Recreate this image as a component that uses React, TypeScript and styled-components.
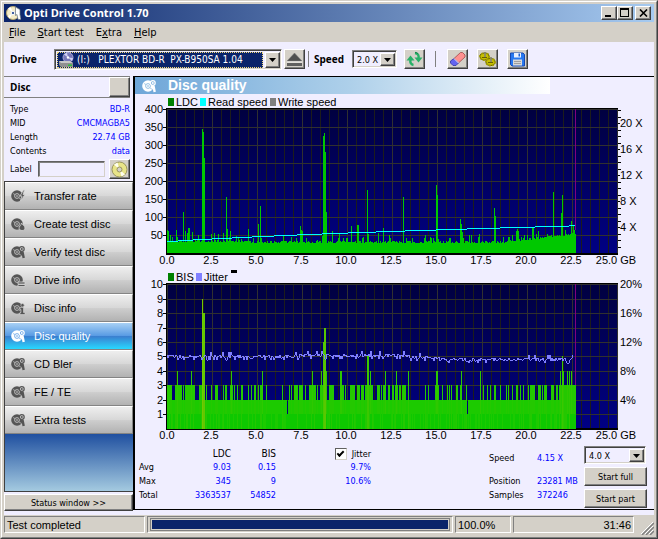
import React from 'react';
import styled, { createGlobalStyle, css } from 'styled-components';

const FACE = '#d4d0c8';
const PANEL = '#f0eeff';
const UI = '"DejaVu Sans Condensed", "Noto Sans", sans-serif';
const SANS = '"Liberation Sans", Arial, sans-serif';
const BOLD = '"Open Sans", "Noto Sans", sans-serif';

const Global = createGlobalStyle`
  *, *::before, *::after { box-sizing: border-box; }
  body { margin: 0; background: ${FACE}; font-family: ${UI}; font-size: 9px; color: #000; }
  button, input, select { font: inherit; color: inherit; margin: 0; padding: 0; border-radius: 0; }
  h1, h2, dl, dd, dt { margin: 0; }
  svg { display: block; flex: none; }
`;

const raised = css`
  border: 1px solid;
  border-color: #fff #404040 #404040 #fff;
  box-shadow: inset -1px -1px 0 #808080;
  background: ${FACE};
`;
const sunken = css`
  border: 1px solid;
  border-color: #808080 #fff #fff #808080;
`;

const Frame = styled.div`
  min-height: 100vh;
  border: 1px solid;
  border-color: ${FACE} #404040 #404040 ${FACE};
`;
const Inner = styled.div`
  min-height: calc(100vh - 2px);
  border: 1px solid;
  border-color: #fff #808080 #808080 #fff;
  padding: 2px;
  background: ${FACE};
  display: flex;
  flex-direction: column;
`;
const TitleBar = styled.header`
  height: 18px;
  display: flex;
  align-items: center;
  gap: 3px;
  padding: 0 3px 0 2px;
  background: linear-gradient(90deg, #0a246a, #a6caf0);
`;
const Title = styled.h1`
  flex: 1;
  font: bold 11px/18px ${BOLD};
  color: #fff;
`;
const CaptionButtons = styled.div`
  display: flex;
`;
const CaptionButton = styled.button<{ $apart?: boolean }>`
  ${raised}
  width: 16px;
  height: 14px;
  display: flex;
  align-items: center;
  justify-content: center;
  margin-left: ${(p) => (p.$apart ? 2 : 0)}px;
`;
const MenuBar = styled.nav`
  height: 20px;
  display: flex;
  align-items: center;
  gap: 12px;
  padding: 1px 5px 0;
`;
const MenuItem = styled.button`
  border: 0;
  background: none;
  font: 11px/18px ${UI};
`;

const Toolbar = styled.div`
  height: 34px;
  background: ${PANEL};
  display: flex;
  align-items: center;
  padding: 0 6px;
`;
const ToolLabel = styled.label<{ $w: number }>`
  font: bold 10px/16px ${BOLD};
  width: ${(p) => p.$w}px;
  flex: none;
`;
const Combo = styled.span<{ $w: number; $h: number }>`
  width: ${(p) => p.$w}px;
  height: ${(p) => p.$h}px;
  flex: none;
  display: flex;
  border: 1px solid;
  border-color: #808080 #fff #fff #808080;
  box-shadow: inset 1px 1px 0 #404040, inset -1px -1px 0 ${FACE};
  padding: 2px 1px 1px 2px;
  background: ${PANEL};
`;
const ComboValue = styled.span<{ $selected?: boolean }>`
  flex: 1;
  min-width: 0;
  display: flex;
  align-items: center;
  gap: 3px;
  padding-left: 2px;
  ${(p) =>
    p.$selected &&
    css`
      background: #0a246a;
      color: #fff;
      border: 1px dotted #f0d878;
      padding-left: 0;
      margin-right: 2px;
    `}
`;
const Select = styled.select<{ $large?: boolean }>`
  appearance: none;
  border: 0;
  background: transparent;
  flex: 1;
  min-width: 0;
  outline: none;
  font-size: ${(p) => (p.$large ? 10 : 9)}px;
  option { color: #000; }
`;
const ComboArrow = styled.span`
  ${raised}
  width: 15px;
  display: flex;
  align-items: center;
  justify-content: center;
`;
const ToolButton = styled.button<{ $left?: number }>`
  ${raised}
  width: 21px;
  height: 20px;
  flex: none;
  display: flex;
  align-items: center;
  justify-content: center;
  margin-left: ${(p) => p.$left ?? 0}px;
`;
const Divider = styled.span<{ $left: number; $right: number }>`
  width: 1px;
  height: 16px;
  background: #808080;
  margin: 0 ${(p) => p.$right}px 0 ${(p) => p.$left}px;
`;

const Main = styled.div`
  flex: 1;
  display: grid;
  grid-template-columns: 129px 1fr;
  background: ${PANEL};
`;
const Side = styled.aside`
  display: flex;
  flex-direction: column;
`;
const DiscHead = styled.div`
  height: 22px;
  margin-right: 3px;
  border-top: 1px solid #808080;
  border-bottom: 1px solid #808080;
  display: flex;
  align-items: center;
  justify-content: space-between;
  padding-left: 6px;
`;
const DiscTitle = styled.h2`
  font: bold 10px/18px ${BOLD};
`;
const Facts = styled.dl`
  padding: 4px 3px 0 6px;
  line-height: 14px;
`;
const Fact = styled.div`
  display: flex;
  justify-content: space-between;
  dd { color: #00f; }
`;
const LabelRow = styled.div`
  display: flex;
  align-items: center;
  padding: 0 3px 1px 6px;
  height: 23px;
  label { width: 28px; }
`;
const LabelInput = styled.input`
  flex: 1;
  min-width: 0;
  height: 16px;
  background: ${PANEL};
  border: 1px solid;
  border-color: #606060 ${FACE} ${FACE} #606060;
  box-shadow: inset 1px 1px 0 #808080;
  margin-right: 4px;
`;
const NavList = styled.nav`
  flex: 1;
  display: flex;
  flex-direction: column;
  border: 1px solid #404040;
  border-right-width: 0;
`;
const NavButton = styled.button<{ $on?: boolean }>`
  height: 28px;
  border: 0;
  border-top: 1px solid #fff;
  border-bottom: 1px solid #848484;
  border-right: 1px solid #848484;
  display: flex;
  align-items: center;
  gap: 8px;
  padding-left: 6px;
  font: 11px/16px ${SANS};
  color: ${(p) => (p.$on ? '#fff' : '#000')};
  background: ${(p) =>
    p.$on
      ? 'linear-gradient(#a8d0f4 0, #5a9ce4 48%, #3a80d0 52%, #28d8ff 100%)'
      : 'linear-gradient(#eeeeee 0, #d8d8d8 48%, #cdcdcd 52%, #b2b2b2 100%)'};
`;
const NavFill = styled.div`
  flex: 1;
  background: linear-gradient(#2050a0, #a4cae0);
`;
const StatusButton = styled.button`
  ${raised}
  height: 17px;
  margin-top: 2px;
  line-height: 14px;
`;

const Content = styled.main`
  border-top: 1px solid #000;
  border-left: 2px solid #000;
  border-bottom: 1px solid #000;
  display: flex;
  flex-direction: column;
  box-shadow: 0 1px 0 ${PANEL}, 0 2px 0 #404040;
  margin-bottom: 1px;
`;
const Banner = styled.div`
  width: 80%;
  height: 17px;
  display: flex;
  align-items: center;
  gap: 11px;
  padding-left: 7px;
  background: linear-gradient(90deg, #6ea6d8, #aed0ea 52%, #fff);
  h2 { font: bold 14px/17px ${SANS}; color: #fff; }
`;
const Plot = styled.svg`
  width: 100%;
  height: auto;
  font: 11px ${SANS};
`;

const Results = styled.div`
  display: flex;
  justify-content: space-between;
  align-items: flex-start;
  padding: 2px 7px 0 4px;
  height: 65px;
`;
const Stats = styled.table`
  border-collapse: collapse;
  margin-top: 2px;
  th, td { padding: 0; height: 14px; line-height: 14px; text-align: right; font-weight: normal; }
  td { color: #00f; }
  thead th, thead td { font-size: 10px; height: 12px; line-height: 12px; }
  tbody th { text-align: left; width: 48px; }
`;
const StatCol = styled.col<{ $w: number }>`
  width: ${(p) => p.$w}px;
`;
const CheckLabel = styled.label`
  display: flex;
  align-items: center;
  justify-content: flex-end;
  gap: 5px;
  font-size: 9px;
`;
const Check = styled.input`
  appearance: none;
  width: 12px;
  height: 12px;
  border: 1px solid;
  border-color: #606060 ${FACE} ${FACE} #606060;
  background: #fff;
  display: grid;
  place-items: center;
  &:checked::before {
    content: '';
    width: 7px;
    height: 4px;
    border: solid #000;
    border-width: 0 0 2px 2px;
    rotate: -45deg;
    translate: 0 -1px;
  }
`;
const RunArea = styled.div`
  display: flex;
  gap: 3px;
`;
const Readout = styled.dl`
  display: grid;
  grid-template-columns: 48px 44px;
  grid-template-rows: 23px 14px 14px;
  line-height: 14px;
  padding-top: 5px;
  dd { color: #00f; white-space: nowrap; }
`;
const RunControls = styled.div`
  display: flex;
  flex-direction: column;
  gap: 3px;
`;
const RunButton = styled.button`
  ${raised}
  width: 63px;
  height: 19px;
`;

const StatusBar = styled.footer`
  height: 24px;
  padding-top: 5px;
  display: flex;
  gap: 2px;
  background: linear-gradient(${PANEL} 4px, ${FACE} 4px);
  font: 11px/16px ${SANS};
`;
const Pane = styled.div<{ $w?: number; $right?: boolean; $pad?: number }>`
  ${sunken}
  ${(p) => (p.$w ? `width: ${p.$w}px;` : 'flex: 1; min-width: 0;')}
  height: 17px;
  padding: ${(p) => p.$pad ?? 0}px 2px;
  text-align: ${(p) => (p.$right ? 'right' : 'left')};
`;
const Track = styled.div`
  border: 1px solid #808080;
  height: 13px;
  padding: 1px;
`;
const Bar = styled.div`
  height: 100%;
  background: #0a246a;
`;
const Grip = styled.span`
  width: 18px;
  display: flex;
  align-items: flex-end;
  justify-content: flex-end;
`;

/* ---------- plot data ---------- */

const LEFT = 167;
const END = 575;

function noise(n: number) {
  const v = Math.sin(n * 12.9898 + 4.1) * 43758.5453;
  return v - Math.floor(v);
}

const ldcPeaks: Record<number, number> = {
  167: 230, 168: 231, 170: 235, 176: 230, 177: 237, 183: 212, 185: 231, 187: 233, 188: 228, 189: 228, 192: 232,
  198: 235, 202: 129, 203: 132, 204: 158, 211: 234, 214: 233, 218: 234, 223: 233, 226: 197, 227: 229, 230: 231,
  236: 236, 241: 239, 248: 229, 253: 238, 258: 224, 260: 206, 283: 236, 291: 237, 300: 226, 301: 230, 302: 231,
  306: 238, 317: 240, 322: 236, 323: 136, 324: 133, 325: 152, 326: 212, 332: 231, 339: 233, 347: 238, 351: 226,
  357: 225, 358: 225, 363: 237, 367: 190, 368: 234, 378: 233, 383: 228, 389: 235, 403: 197, 425: 235, 430: 237,
  436: 185, 437: 195, 438: 239, 460: 219, 461: 224, 462: 232, 469: 235, 471: 235, 478: 237, 479: 234, 494: 208,
  495: 216, 503: 237, 508: 237, 512: 235, 516: 231, 517: 229, 518: 231, 521: 237, 529: 238, 532: 228, 533: 228,
  538: 231, 547: 234, 553: 192, 561: 213, 562: 195, 565: 230, 566: 234, 571: 221, 573: 226, 574: 230,
};
function ldcTop(x: number) {
  if (ldcPeaks[x]) return ldcPeaks[x];
  const drift = x > 500 ? Math.round((x - 500) / 9) : 0;
  const r = noise(x);
  const lift = r > 0.93 ? 5 : r > 0.7 ? 2 : r > 0.35 ? 1 : 0;
  return Math.max(232, (x < 245 ? 242 : 243) - lift - drift);
}
function columns(top: (x: number) => number, base: number) {
  let d = '';
  for (let x = LEFT; x <= END; x++) d += `M${x} ${top(x)}h1V${base}h-1z`;
  return d;
}
const ldcPath = columns(ldcTop, 253);

const speedSteps = [178, 193, 212, 232, 252, 274, 297, 322, 348, 376, 405, 436, 467, 500, 535, 569, 575];

const bisThree = [
  [167, 171], [175, 181], [183, 183], [185, 192], [193, 194], [199, 201], [206, 206], [211, 211], [215, 217],
  [223, 223], [225, 226], [230, 232], [234, 234], [237, 237], [241, 242], [248, 248], [251, 251], [254, 255],
  [258, 258], [260, 262], [266, 266], [282, 282], [289, 289], [291, 291], [294, 297], [299, 302], [305, 305],
  [309, 315], [317, 317], [320, 326], [329, 333], [340, 343], [345, 345], [350, 354], [357, 359], [361, 363],
  [365, 372], [377, 379], [381, 381], [383, 385], [388, 389], [392, 393], [395, 397], [399, 400], [402, 405],
  [408, 408], [425, 425], [428, 428], [435, 438], [442, 442], [447, 447], [449, 449], [451, 451], [456, 457],
  [460, 460], [466, 466], [480, 480], [483, 483], [487, 487], [490, 490], [494, 495], [500, 500], [506, 506],
  [508, 508], [512, 512], [516, 517], [520, 520], [523, 523], [528, 528], [530, 534], [538, 540], [542, 542],
  [544, 546], [551, 553], [556, 557], [559, 575],
];
const bisHigh: Record<number, number> = {
  177: 4, 191: 4, 202: 9, 203: 8, 204: 8, 231: 4, 262: 4, 312: 4, 321: 4, 323: 6, 324: 7, 325: 7, 326: 4, 340: 4,
  341: 4, 367: 5, 368: 5, 370: 4, 385: 4, 396: 4, 408: 4, 436: 4, 437: 4, 461: 4, 480: 4, 560: 4, 562: 5, 563: 4,
  567: 4, 569: 4, 571: 4, 287: 1, 467: 1,
};
const bisY = [428, 414, 400, 385, 371, 356, 342, 328, 313, 299, 284];
const bisColour = ['', '#14c800', '#1cca00', '#24c800', '#2ec800', '#3ac800', '#4cc800', '#58c800', '#62c800', '#74c800'];
const bisBars = Array.from({ length: END - LEFT + 1 }, (_, i) => {
  const x = LEFT + i;
  const v = bisHigh[x] ?? (bisThree.some(([a, b]) => x >= a && x <= b) ? 3 : 2);
  return { x, v };
});
const jitterPoints = Array.from({ length: END - LEFT - 1 }, (_, i) => {
  const x = LEFT + i;
  const mid = x < 300 ? 357 : x < 410 ? 356 : x < 440 ? 358 : 360;
  const r = noise(x + 900);
  const y = mid + (r > 0.97 ? -5 : r > 0.8 ? -2 : r > 0.55 ? -1 : r > 0.3 ? 0 : r > 0.1 ? 1 : 3);
  return `${x},${y}`;
}).join(' ');

const gb = Array.from({ length: 11 }, (_, i) => i * 2.5);

function Field({ id, top, rows }: { id: string; top: number; rows: number[] }) {
  return (
    <g shapeRendering="crispEdges">
      <linearGradient id={id} x1="0" y1="0" x2="0" y2="1">
        <stop offset="0" stopColor="#000040" />
        <stop offset="1" stopColor="#000084" />
      </linearGradient>
      <rect x="166" y={top - 1} width="452" height="147" fill="#000" />
      <rect x="167" y={top} width="450" height="144" fill={`url(#${id})`} />
      {Array.from({ length: 51 }, (_, i) => (
        <rect key={i} x={167 + i * 9} y={top} width="1" height="144" fill={i % 5 ? '#1c1c1c' : '#303030'} />
      ))}
      {rows.map((y) => (
        <rect key={y} x="167" y={y} width="450" height="1" fill="#303030" />
      ))}
      {rows.map((y) => (
        <rect key={y} x="163" y={y} width="3" height="1" fill="#000" />
      ))}
    </g>
  );
}
function GbAxis({ y }: { y: number }) {
  return (
    <g textAnchor="middle">
      {gb.map((v) => (
        <text key={v} x={v === 25 ? 616 : 167 + v * 18 - (v ? 1 : 0)} y={y}>
          {v === 25 ? '25.0 GB' : v.toFixed(1)}
        </text>
      ))}
    </g>
  );
}

function LdcChart() {
  const rows = [109, 127, 145, 163, 181, 199, 217, 235];
  return (
    <Plot viewBox="135 94 519 174" role="img" aria-label="LDC, read speed and write speed">
      <rect x="168" y="98" width="6" height="8" fill="#008000" />
      <text x="176" y="106">LDC</text>
      <rect x="200" y="98" width="6" height="8" fill="#0ff" />
      <text x="208" y="106">Read speed</text>
      <rect x="270" y="98" width="6" height="8" fill="#808080" />
      <text x="278" y="106">Write speed</text>
      <Field id="ldcField" top={109} rows={rows} />
      <g shapeRendering="crispEdges">
        <path d={ldcPath} fill="#00c800" />
        <rect x="575" y="109" width="1" height="121" fill="#800080" />
        {speedSteps.map((end, i) => {
          const start = i ? speedSteps[i - 1] : LEFT;
          return <rect key={end} x={start} y={241 - i} width={end - start} height="1" fill="#0ff" />;
        })}
        {Array.from({ length: 22 }, (_, i) => (
          <rect key={i} x="618" y={Math.round(246.5 - i * 6.5)} width={i % 4 === 3 ? 2 : 3} height="1" fill="#000" />
        ))}
      </g>
      <g textAnchor="end">
        {rows.map((y, i) => (
          <text key={y} x="163" y={y + 4}>{400 - i * 50}</text>
        ))}
      </g>
      {[20, 16, 12, 8, 4].map((v, i) => (
        <text key={v} x="620" y={127 + i * 26}>{`${v} X`}</text>
      ))}
      <GbAxis y={264} />
    </Plot>
  );
}

function BisChart() {
  const rows = bisY.slice(1).reverse();
  return (
    <Plot viewBox="135 268 519 176" role="img" aria-label="BIS and jitter">
      <rect x="168" y="273" width="6" height="8" fill="#008000" />
      <text x="176" y="281">BIS</text>
      <rect x="196" y="273" width="6" height="8" fill="#8080ff" />
      <text x="204" y="281">Jitter</text>
      <rect x="231" y="270" width="6" height="3" />
      <Field id="bisField" top={284} rows={rows} />
      <g shapeRendering="crispEdges">
        {bisBars.map(({ x, v }) => (
          <rect key={x} x={x} y={bisY[v]} width="1" height={429 - bisY[v]} fill={bisColour[v]} />
        ))}
        {bisBars.map(({ x, v }) =>
          v < 5 && noise(x + 50) > 0.35 ? <rect key={x} x={x} y="414" width="1" height="15" fill="#0ec800" /> : null,
        )}
        <rect x="575" y="284" width="1" height="101" fill="#800080" />
      </g>
      <polyline points={jitterPoints} fill="none" stroke="#8080ff" strokeWidth="1" shapeRendering="crispEdges" />
      <g textAnchor="end">
        {rows.map((y, i) => (
          <text key={y} x="163" y={y + 4}>{10 - i}</text>
        ))}
      </g>
      {[20, 16, 12, 8, 4].map((v, i) => (
        <text key={v} x="620" y={288 + i * 29}>{`${v}%`}</text>
      ))}
      <GbAxis y={439} />
    </Plot>
  );
}

/* ---------- icons ---------- */

type Badge = 'bolt' | 'flame' | 'glass' | 'drive' | 'info';

function DiscIcon({ badge, colour = '#555', back = '#d4d4d4' }: { badge: Badge; colour?: string; back?: string }) {
  return (
    <svg width="15" height="14" viewBox="0 0 15 14" aria-hidden="true">
      <circle cx="6" cy="7" r="5.8" fill={colour} />
      <circle cx="6" cy="7" r="2.4" fill="none" stroke={back} strokeWidth="0.8" />
      <circle cx="6" cy="7" r="0.8" fill={back} />
      <path d="M2 4.5l2 1M8 9l2 1.2" stroke={back} strokeWidth="0.6" />
      {badge === 'bolt' && <path d="M12.5 1L9 7h2l-1.5 5L14 5.5h-2L13.5 1z" fill={colour} stroke={back} strokeWidth="0.8" />}
      {badge === 'flame' && <path d="M10.5 6c.5 1.5 3.5 3 3.5 5s-1.5 2.5-3 2.5S8 12.5 8 11s2.500-3 2.500-5z" fill={colour} stroke={back} strokeWidth="0.8" />}
      {badge === 'drive' && <path d="M7 9h7v2H7zM7 11.5h7v2H7z" fill={colour} stroke={back} strokeWidth="0.8" />}
      {badge === 'info' && (
        <>
          <circle cx="11.5" cy="4.2" r="1.7" fill={colour} stroke={back} strokeWidth="0.6" />
          <path d="M9 6.5h3.5v5H14v2H9v-2h1v-3H9z" fill={colour} stroke={back} strokeWidth="0.6" />
        </>
      )}
      {badge === 'glass' && (
        <>
          <circle cx="10.8" cy="4" r="2.4" fill={back} stroke={colour} strokeWidth="1.2" />
          <circle cx="10.8" cy="4" r="1" fill={colour} />
          <path d="M11.5 7l1.2 6" stroke={colour} strokeWidth="2.4" />
        </>
      )}
    </svg>
  );
}

const AppIcon = () => (
  <svg width="15" height="16" viewBox="0 0 15 16" aria-hidden="true">
    <circle cx="7" cy="8" r="6.5" fill="#f4ecc8" stroke="#b8a870" />
    <path d="M7 8L2 3.5 4.5 2zM7 8l-3.500 5.500L2 11z" fill="#fff" />
    <circle cx="7" cy="8" r="1.8" fill="#4060a0" stroke="#fff" />
    <path d="M9.500 2l2.500 1.500 2 1v5l1 5h-3l-1-5-1.500 1z" fill="#fff" stroke="#607080" strokeWidth="0.7" />
  </svg>
);
const DriveIcon = () => (
  <svg width="16" height="16" viewBox="0 0 16 16" aria-hidden="true">
    <circle cx="10" cy="5.5" r="5" fill="#7878b8" stroke="#a8a8d8" />
    <path d="M10 5.5L6 2.5 9 .8zM10 5.5l4 3.5 1-3z" fill="#d0d0f4" />
    <circle cx="10" cy="5.5" r="1.2" fill="#fff" />
    <path d="M1 9h11l3 2v4H3l-2-2z" fill="#909090" />
    <path d="M1 9h11l3 2H3z" fill="#c8c8c8" />
    <rect x="10" y="12.5" width="4" height="1.5" fill="#30c040" />
  </svg>
);
const Arrow = () => (
  <svg width="7" height="4" viewBox="0 0 7 4" aria-hidden="true"><path d="M0 0h7L3.5 4z" /></svg>
);
const EjectIcon = () => (
  <svg width="17" height="15" viewBox="0 0 17 15" aria-hidden="true">
    <path d="M8.5 1L16 9H1z" fill="#505050" stroke="#808080" strokeWidth="0.5" />
    <path d="M1 11h15v3H1z" fill="#606060" />
    <path d="M1 10h15" stroke="#fff" strokeWidth="0.7" />
  </svg>
);
const RefreshIcon = () => (
  <svg width="17" height="16" viewBox="0 0 17 16" aria-hidden="true">
    <path d="M7.500 14C4.500 13.500 4 11 4.500 8.500" fill="none" stroke="#28b068" strokeWidth="2.4" />
    <path d="M.5 9.500L4.500 4.500 8.500 9.500z" fill="#28b068" />
    <path d="M9 2c3.500.5 4 3 3.500 5.500" fill="none" stroke="#28b068" strokeWidth="2.4" />
    <path d="M8.500 6.500h8L12.500 11.500z" fill="#28b068" />
    <path d="M9 1.500c1.500 0 2.500.5 3 1.500" fill="none" stroke="#188048" />
  </svg>
);
const EraserIcon = () => (
  <svg width="17" height="16" viewBox="0 0 17 16" aria-hidden="true">
    <path d="M11.500 1.500h2L16 4v2L9.500 12 5 7.500z" fill="#ff9090" stroke="#a04848" strokeWidth="0.8" />
    <path d="M5 7.500L9.500 12 7 14.500H4L1.500 12v-2z" fill="#6464f0" stroke="#3434a0" strokeWidth="0.8" />
    <path d="M5 7.500L9.500 12" stroke="#fff" />
  </svg>
);
const GearsIcon = () => (
  <svg width="17" height="16" viewBox="0 0 17 16" aria-hidden="true">
    <g fill="#c8c000" stroke="#605c00">
      <ellipse cx="5.5" cy="5.5" rx="4.500" ry="3.500" strokeWidth="1" />
      <ellipse cx="11.5" cy="11" rx="4.500" ry="3.500" strokeWidth="1" />
    </g>
    <g fill="none" stroke="#a8a000" strokeDasharray="1.500 1.500" strokeWidth="2">
      <ellipse cx="5.5" cy="5.5" rx="4.500" ry="3.500" />
      <ellipse cx="11.5" cy="11" rx="4.500" ry="3.500" />
    </g>
    <path d="M6 1v5M12 6v5" stroke="#808080" strokeWidth="1.5" />
    <path d="M3 6.5h5M9 11.5h5" stroke="#686000" />
  </svg>
);
const SaveIcon = () => (
  <svg width="15" height="15" viewBox="0 0 15 15" aria-hidden="true">
    <path d="M1 1h12l1.5 1.5V14H2L.5 12.5V1z" fill="#2878f0" stroke="#1848b0" />
    <rect x="4" y="1" width="7" height="4.5" fill="#e8f0ff" />
    <rect x="8.5" y="1.5" width="1.5" height="3" fill="#2060d0" />
    <rect x="3" y="7.5" width="9" height="6" fill="#d8d8d8" />
    <path d="M4 9.5h7M4 11.5h7" stroke="#909090" strokeWidth="0.8" />
  </svg>
);
const YellowDisc = () => (
  <svg width="17" height="17" viewBox="0 0 17 17" aria-hidden="true">
    <circle cx="8.5" cy="8.5" r="7.5" fill="#e8e488" stroke="#98945c" />
    <path d="M8.5 8.5L3 3.5 6.5 1.5zM8.5 8.5l5.5 5-3.5 2z" fill="#fffff0" />
    <circle cx="8.5" cy="8.5" r="2.5" fill="#d4d0c8" stroke="#98945c" />
  </svg>
);

const navItems: { text: string; badge: Badge; on?: boolean }[] = [
  { text: 'Transfer rate', badge: 'bolt' },
  { text: 'Create test disc', badge: 'flame' },
  { text: 'Verify test disc', badge: 'glass' },
  { text: 'Drive info', badge: 'drive' },
  { text: 'Disc info', badge: 'info' },
  { text: 'Disc quality', badge: 'glass', on: true },
  { text: 'CD Bler', badge: 'glass' },
  { text: 'FE / TE', badge: 'glass' },
  { text: 'Extra tests', badge: 'glass' },
];

export default function App() {
  return (
    <Frame>
      <Global />
      <Inner>
        <TitleBar>
          <AppIcon />
          <Title>Opti Drive Control 1.70</Title>
          <CaptionButtons>
            <CaptionButton aria-label="Minimize">
              <svg width="10" height="10" viewBox="0 0 10 10"><path d="M1 7h6v2H1z" /></svg>
            </CaptionButton>
            <CaptionButton aria-label="Maximize">
              <svg width="10" height="10" viewBox="0 0 10 10"><path d="M0 0h9v9H0zM1 2v6h7V2z" fillRule="evenodd" /></svg>
            </CaptionButton>
            <CaptionButton aria-label="Close" $apart>
              <svg width="9" height="8" viewBox="0 0 9 8"><path d="M1 .5l7 7M8 .5l-7 7" stroke="#000" strokeWidth="1.6" /></svg>
            </CaptionButton>
          </CaptionButtons>
        </TitleBar>
        <MenuBar>
          <MenuItem><u>F</u>ile</MenuItem>
          <MenuItem><u>S</u>tart test</MenuItem>
          <MenuItem>E<u>x</u>tra</MenuItem>
          <MenuItem><u>H</u>elp</MenuItem>
        </MenuBar>
        <Toolbar>
          <ToolLabel htmlFor="drive" $w={44}>Drive</ToolLabel>
          <Combo $w={228} $h={21}>
            <ComboValue $selected>
              <DriveIcon />
              <Select id="drive" $large>
                <option>{'(I:)\u00a0\u00a0\u00a0PLEXTOR BD-R\u00a0\u00a0PX-B950SA 1.04'}</option>
              </Select>
            </ComboValue>
            <ComboArrow><Arrow /></ComboArrow>
          </Combo>
          <ToolButton aria-label="Eject" $left={2}><EjectIcon /></ToolButton>
          <Divider $left={3} $right={5} />
          <ToolLabel htmlFor="speed" $w={38}>Speed</ToolLabel>
          <Combo $w={45} $h={18}>
            <ComboValue>
              <Select id="speed"><option>2.0 X</option></Select>
            </ComboValue>
            <ComboArrow><Arrow /></ComboArrow>
          </Combo>
          <ToolButton aria-label="Refresh" $left={7}><RefreshIcon /></ToolButton>
          <Divider $left={10} $right={11} />
          <ToolButton aria-label="Erase"><EraserIcon /></ToolButton>
          <ToolButton aria-label="Options" $left={9}><GearsIcon /></ToolButton>
          <ToolButton aria-label="Save" $left={9}><SaveIcon /></ToolButton>
        </Toolbar>
        <Main>
          <Side>
            <DiscHead>
              <DiscTitle>Disc</DiscTitle>
              <ToolButton aria-label="Disc options" />
            </DiscHead>
            <Facts>
              <Fact><dt>Type</dt><dd>BD-R</dd></Fact>
              <Fact><dt>MID</dt><dd>CMCMAGBA5</dd></Fact>
              <Fact><dt>Length</dt><dd>22.74 GB</dd></Fact>
              <Fact><dt>Contents</dt><dd>data</dd></Fact>
            </Facts>
            <LabelRow>
              <label htmlFor="label">Label</label>
              <LabelInput id="label" />
              <ToolButton aria-label="Read label"><YellowDisc /></ToolButton>
            </LabelRow>
            <NavList>
              {navItems.map(({ text, badge, on }) => (
                <NavButton key={text} $on={on}>
                  <DiscIcon badge={badge} colour={on ? '#fff' : '#555'} back={on ? '#5a9ce4' : '#d4d4d4'} />
                  {text}
                </NavButton>
              ))}
              <NavFill />
            </NavList>
            <StatusButton>Status window &gt;&gt;</StatusButton>
          </Side>
          <Content>
            <Banner>
              <DiscIcon badge="glass" colour="#fff" back="#7cb0dc" />
              <h2>Disc quality</h2>
            </Banner>
            <LdcChart />
            <BisChart />
            <Results>
              <Stats>
                <colgroup>
                  <StatCol $w={48} />
                  <StatCol $w={44} />
                  <StatCol $w={45} />
                  <StatCol $w={95} />
                </colgroup>
                <thead>
                  <tr>
                    <td />
                    <th scope="col">LDC</th>
                    <th scope="col">BIS</th>
                    <th scope="col"><CheckLabel><Check type="checkbox" defaultChecked />Jitter</CheckLabel></th>
                  </tr>
                </thead>
                <tbody>
                  <tr><th scope="row">Avg</th><td>9.03</td><td>0.15</td><td>9.7%</td></tr>
                  <tr><th scope="row">Max</th><td>345</td><td>9</td><td>10.6%</td></tr>
                  <tr><th scope="row">Total</th><td>3363537</td><td>54852</td><td /></tr>
                </tbody>
              </Stats>
              <RunArea>
                <Readout>
                  <dt>Speed</dt><dd>4.15 X</dd>
                  <dt>Position</dt><dd>23281 MB</dd>
                  <dt>Samples</dt><dd>372246</dd>
                </Readout>
                <RunControls>
                  <Combo $w={62} $h={18}>
                    <ComboValue>
                      <Select aria-label="Test speed"><option>4.0 X</option></Select>
                    </ComboValue>
                    <ComboArrow><Arrow /></ComboArrow>
                  </Combo>
                  <RunButton>Start full</RunButton>
                  <RunButton>Start part</RunButton>
                </RunControls>
              </RunArea>
            </Results>
          </Content>
        </Main>
        <StatusBar>
          <Pane $w={141}>Test completed</Pane>
          <Pane $pad={1}><Track><Bar /></Track></Pane>
          <Pane $w={56}>100.0%</Pane>
          <Pane $w={121} $right>31:46</Pane>
          <Grip>
            <svg width="13" height="13" viewBox="0 0 13 13" aria-hidden="true">
              <path d="M1 13L13 1M5 13l8-8M9 13l4-4" stroke="#808080" strokeWidth="1.5" />
              <path d="M0 12L12 0M4 12l8-8M8 12l4-4" stroke="#fff" />
            </svg>
          </Grip>
        </StatusBar>
      </Inner>
    </Frame>
  );
}
